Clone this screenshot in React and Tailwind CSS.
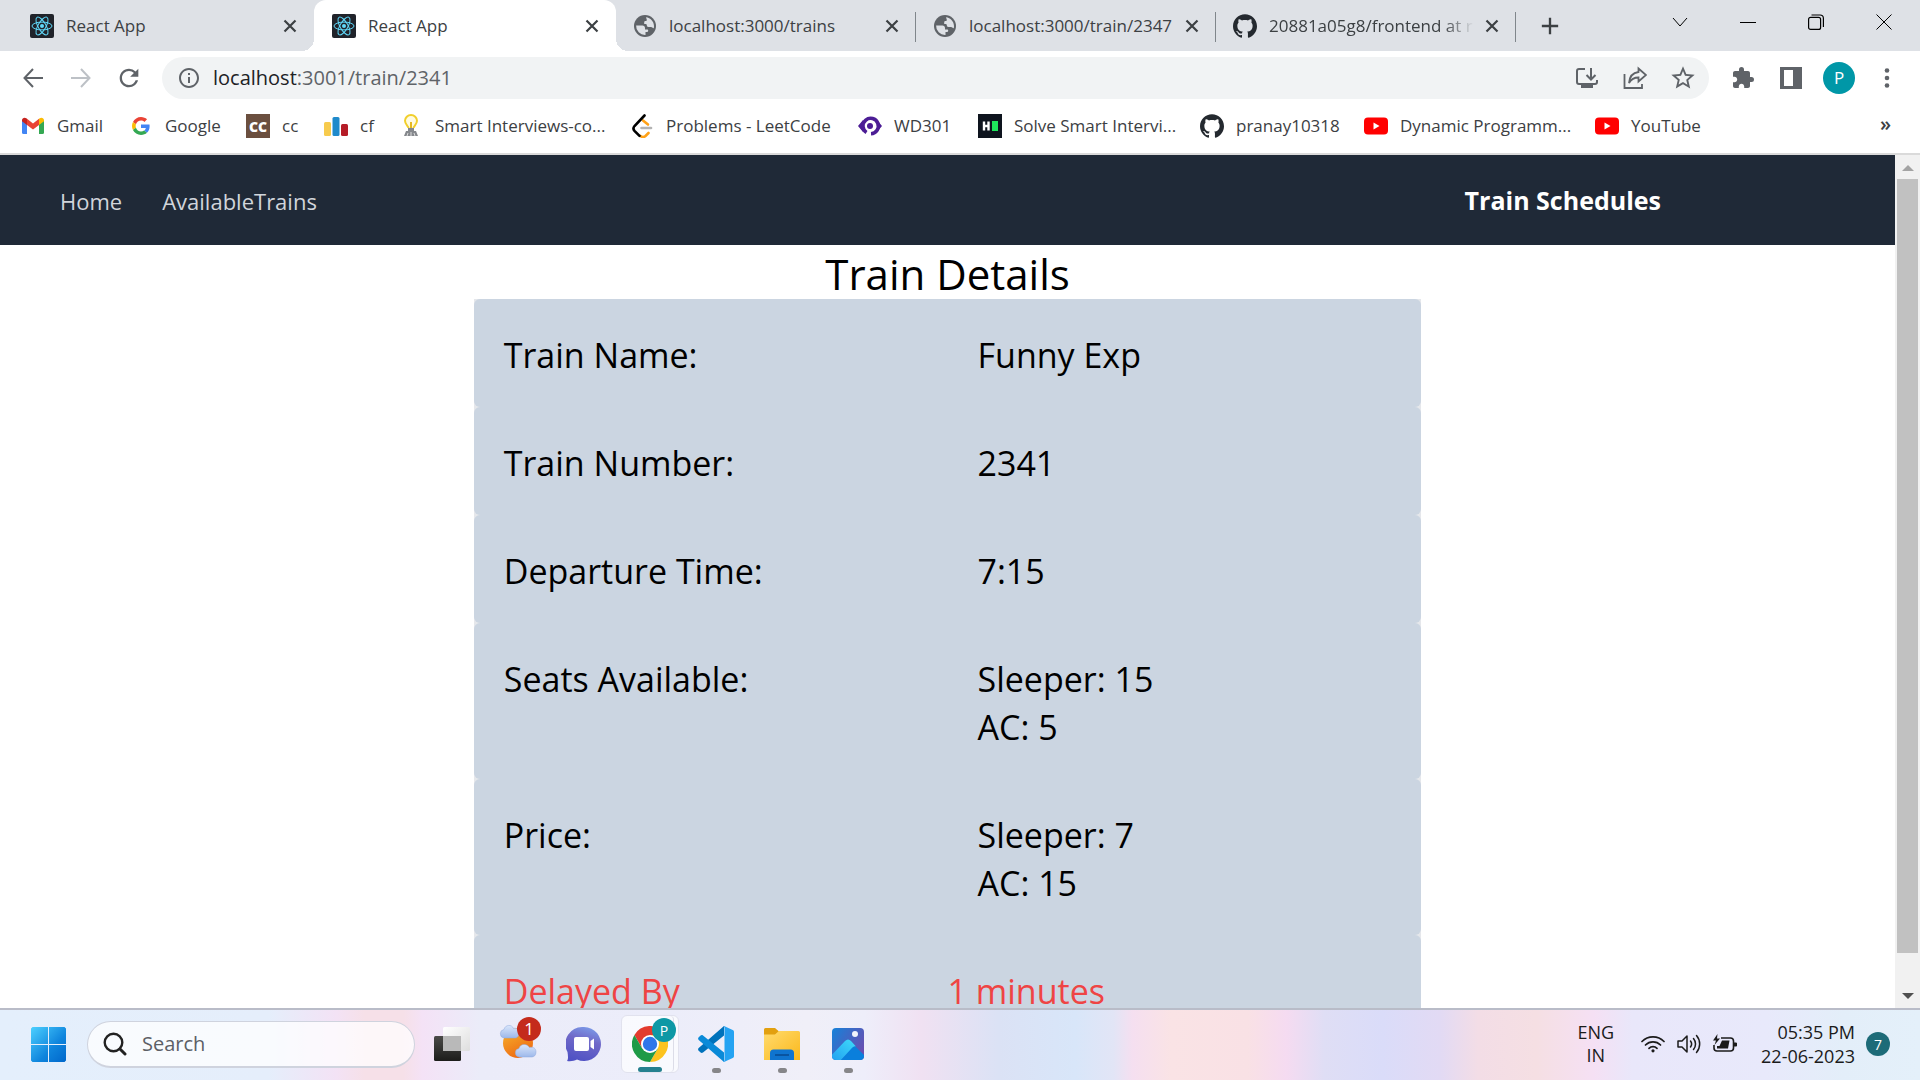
import React from "react";
import { SiGithub } from "react-icons/si";
import { MdExtension, MdStarBorder, MdAdd, MdRefresh, MdInfoOutline } from "react-icons/md";

const ReactFavicon = () => (
  <svg viewBox="0 0 24 24" className="size-6 shrink-0" aria-hidden="true">
    <rect width="24" height="24" rx="2" fill="#20232a" />
    <g fill="none" stroke="#61dafb" strokeWidth="1">
      <ellipse cx="12" cy="12" rx="10" ry="3.9" />
      <ellipse cx="12" cy="12" rx="10" ry="3.9" transform="rotate(60 12 12)" />
      <ellipse cx="12" cy="12" rx="10" ry="3.9" transform="rotate(120 12 12)" />
    </g>
    <circle cx="12" cy="12" r="2" fill="#61dafb" />
  </svg>
);

const GlobeFavicon = () => (
  <svg viewBox="0 0 24 24" className="size-6 shrink-0" aria-hidden="true">
    <circle cx="12" cy="12" r="11" fill="#5f6368" />
    <path
      d="M13 3.200c4.500.6 8 4.300 8 8.800 0 .8-.1 1.500-.3 2.200-1.200-.2-1.500-1.200-2.700-1.200h-2.500c-1.200 0-1.700-.8-1.700-2s-1.300-1-2.600-1V8.200c0-.8.600-1.200 1.400-1.200.9 0 1.200-.5 1.200-1.300z"
      fill="#dee1e6"
    />
    <path
      d="M3.100 11.500h6.400c1.500 0 2.500 1 2.500 2.500v1.500h2c.8 0 1.200.5 1.200 1.300 0 1-.7 1.200-1.700 1.200H12.500v2.900A9 9 0 0 1 3.100 11.500z"
      fill="#dee1e6"
    />
  </svg>
);
const GithubIcon = () => <SiGithub className="size-6 shrink-0 text-[#24292f]" aria-hidden="true" />;

const tabs = [
  { title: "React App", icon: <ReactFavicon />, width: "w-[314px] pl-[30px]", active: false, line: false },
  { title: "React App", icon: <ReactFavicon />, width: "w-[302px] pl-[18px]", active: true, line: false },
  { title: "localhost:3000/trains", icon: <GlobeFavicon />, width: "w-[300px] pl-[17px]", active: false, line: true },
  { title: "localhost:3000/train/2347", icon: <GlobeFavicon />, width: "w-[300px] pl-[17px]", active: false, line: true },
  { title: "20881a05g8/frontend at r", icon: <GithubIcon />, width: "w-[300px] pl-[17px]", active: false, line: true, fade: true },
];

function Tab({ title, icon, width, active, line, fade }) {
  return (
    <div className={`relative flex h-full min-w-0 items-center ${width} ${active ? "rounded-t-xl bg-white" : ""}`}>
      {active && (
        <>
          <span className="absolute -left-3 bottom-0 size-3 bg-[radial-gradient(circle_at_0_0,transparent_12px,white_12px)]" />
          <span className="absolute -right-3 bottom-0 size-3 bg-[radial-gradient(circle_at_100%_0,transparent_12px,white_12px)]" />
        </>
      )}
      {icon}
      <span
        className={`ml-3 min-w-0 flex-1 overflow-hidden whitespace-nowrap ${fade ? "mask-r-from-85% mask-r-to-100%" : ""}`}
      >
        {title}
      </span>
      <button aria-label={`Close ${title}`} className="ml-1.5 mr-3 flex size-6 items-center justify-center">
        <svg viewBox="0 0 14 14" className="size-3.5" fill="none" stroke="#3c4043" strokeWidth="2.200">
          <path d="M1.500 1.500l11 11M12.500 1.500l-11 11" />
        </svg>
      </button>
      {line && <span className="absolute right-0 top-3 h-[30px] w-px bg-[#80868b]" />}
    </div>
  );
}

function TabStrip() {
  return (
    <header className="flex h-[51px] items-center bg-[#dee1e6] pr-0.5 text-[17px] text-[#3c4043]">
      {tabs.map((t, i) => (
        <Tab key={i} {...t} />
      ))}
      <button aria-label="New tab" className="ml-5 flex size-7 items-center justify-center">
        <MdAdd className="size-7" />
      </button>
      <div className="mb-2 ml-auto flex items-center text-black">
        <button aria-label="Search tabs" className="flex w-[68px] justify-center">
          <svg viewBox="0 0 16 16" className="size-4" fill="none" stroke="currentColor"><path d="M1 4l7 8 7-8" /></svg>
        </button>
        <button aria-label="Minimize" className="flex w-[68px] justify-center">
          <svg viewBox="0 0 16 16" className="size-4" fill="none" stroke="currentColor"><path d="M0 8.500h16" /></svg>
        </button>
        <button aria-label="Restore" className="flex w-[68px] justify-center">
          <svg viewBox="0 0 16 16" className="size-4" fill="none" stroke="currentColor" strokeWidth="1.200">
            <rect x="0.600" y="3.400" width="12" height="12" rx="2" />
            <path d="M3.500 1h8.500a3.400 3.400 0 0 1 3.400 3.400V13" />
          </svg>
        </button>
        <button aria-label="Close window" className="flex w-[68px] justify-center">
          <svg viewBox="0 0 16 16" className="size-4" fill="none" stroke="currentColor"><path d="M.5.5l15 15M15.500.5l-15 15" /></svg>
        </button>
      </div>
    </header>
  );
}

function Toolbar() {
  return (
    <div className="flex h-[54px] items-center pl-[9px] pr-[9px] text-[#5f6368]">
      <button aria-label="Back" className="flex w-12 justify-center">
        <svg viewBox="0 0 20 20" className="size-5" fill="none" stroke="currentColor" strokeWidth="2"><path d="M20 10H2M10 1L1.500 10l8.500 9" /></svg>
      </button>
      <button aria-label="Forward" className="flex w-12 justify-center text-[#bdc1c6]">
        <svg viewBox="0 0 20 20" className="size-5" fill="none" stroke="currentColor" strokeWidth="2"><path d="M0 10h18M10 1l8.500 9-8.500 9" /></svg>
      </button>
      <button aria-label="Reload" className="flex w-12 justify-center">
        <MdRefresh className="size-7" />
      </button>
      <div className="ml-[9px] flex h-[42px] flex-1 items-center rounded-full bg-[#f1f3f4] pl-[15px] pr-0.5">
        <MdInfoOutline className="size-6" aria-hidden="true" />
        <div className="ml-3 flex-1 text-[20px]" aria-label="Address">
          <span className="text-[#202124]">localhost</span>:3001/train/2341
        </div>
        <button aria-label="Install app" className="flex w-12 justify-center">
          <svg viewBox="0 0 24 24" className="size-6" fill="none" stroke="currentColor" strokeWidth="2">
            <path d="M10 3H4a2 2 0 0 0-2 2v11a2 2 0 0 0 2 2h16a2 2 0 0 0 2-2v-2M16 2v11M11.500 9l4.500 4.500L20.500 9" />
            <path d="M6 20h12" strokeWidth="4" />
          </svg>
        </button>
        <button aria-label="Share" className="flex w-12 justify-center">
          <svg viewBox="0 0 24 24" className="size-6" fill="none" stroke="currentColor" strokeWidth="1.800">
            <path d="M1.500 8v14H19v-4" />
            <path d="M15.500 2.500L23 9l-7.500 6.500v-4C11 11.500 8 13.500 6 17c.5-6 4-10.300 9.500-11z" />
          </svg>
        </button>
        <button aria-label="Bookmark this page" className="flex w-12 justify-center">
          <MdStarBorder className="size-7" />
        </button>
      </div>
      <button aria-label="Extensions" className="ml-2.5 flex w-12 justify-center"><MdExtension className="size-6" /></button>
      <button aria-label="Side panel" className="flex w-12 justify-center">
        <svg viewBox="0 0 22 22" className="size-[22px]"><path fill="currentColor" d="M0 0h22v22H0z" /><path fill="#fff" d="M4 3h9v16H4z" /></svg>
      </button>
      <button aria-label="Profile" className="flex w-12 justify-center">
        <span className="flex size-8 items-center justify-center rounded-full bg-[#0097a7] text-[17px] text-white">P</span>
      </button>
      <button aria-label="Menu" className="flex w-12 justify-center">
        <svg viewBox="0 0 6 20" className="h-5 w-1.5" fill="currentColor"><circle cx="3" cy="2.500" r="2.300" /><circle cx="3" cy="10" r="2.300" /><circle cx="3" cy="17.500" r="2.300" /></svg>
      </button>
    </div>
  );
}

const YoutubeIcon = () => (
  <svg viewBox="0 0 24 24" className="size-6" aria-hidden="true"><rect y="3.500" width="24" height="17" rx="4" fill="#f00" /><path d="M9.500 8.500v7l6-3.500z" fill="#fff" /></svg>
);

const bookmarks = [
  { name: "Gmail", width: "w-[108px]", icon: (
    <svg viewBox="0 0 24 24" className="size-6" aria-hidden="true">
      <path fill="#4285f4" d="M1 6.500v12A1.500 1.500 0 0 0 2.500 20H6V10z" />
      <path fill="#34a853" d="M23 6.500v12a1.500 1.500 0 0 1-1.500 1.500H18V10z" />
      <path fill="#ea4335" d="M6 4.800l6 4.700 6-4.700V11l-6 4.600L6 11z" />
      <path fill="#c5221f" d="M1 6.300C1 4 3.600 3 5.300 4.300L6 4.800V11L1 7.300z" />
      <path fill="#fbbc04" d="M23 6.300c0-2.300-2.600-3.300-4.300-2l-.7.5V11l5-3.700z" />
    </svg>
  ) },
  { name: "Google", width: "w-[117px]", icon: (
    <svg viewBox="0 0 48 48" className="size-[18px]" aria-hidden="true">
      <path fill="#ea4335" d="M24 9.500c3.540 0 6.710 1.220 9.210 3.600l6.850-6.850C35.900 2.380 30.470 0 24 0 14.620 0 6.510 5.380 2.560 13.220l7.980 6.190C12.430 13.720 17.740 9.500 24 9.500z" />
      <path fill="#4285f4" d="M46.980 24.550c0-1.570-.15-3.090-.38-4.550H24v9.020h12.940c-.58 2.960-2.260 5.480-4.780 7.180l7.730 6c4.510-4.180 7.090-10.360 7.090-17.650z" />
      <path fill="#fbbc05" d="M10.530 28.590c-.48-1.450-.76-2.990-.76-4.590s.27-3.140.76-4.590l-7.980-6.190C.92 16.460 0 20.120 0 24s.92 7.540 2.560 10.780l7.970-6.190z" />
      <path fill="#34a853" d="M24 48c6.480 0 11.930-2.130 15.890-5.810l-7.730-6c-2.150 1.450-4.920 2.300-8.160 2.300-6.260 0-11.570-4.220-13.470-9.910l-7.980 6.190C6.510 42.620 14.620 48 24 48z" />
    </svg>
  ) },
  { name: "cc", width: "w-[78px]", icon: (
    <span className="flex size-6 items-center justify-center bg-[#6b4f3f] text-[14px] font-extrabold text-white" aria-hidden="true">CC</span>
  ) },
  { name: "cf", width: "w-[75px]", icon: (
    <svg viewBox="0 0 24 24" className="size-6" aria-hidden="true"><rect y="8" width="7" height="14" rx="1.500" fill="#f7cb4d" /><rect x="8.500" y="3" width="7" height="19" rx="1.500" fill="#1f8acb" /><rect x="17" y="10" width="7" height="12" rx="1.500" fill="#b51c27" /></svg>
  ) },
  { name: "Smart Interviews-co...", width: "w-[231px]", icon: (
    <svg viewBox="0 0 24 24" className="size-6" aria-hidden="true">
      <path d="M9.500 14c0-2-3.500-3.500-3.500-7.200a6 5.800 0 0 1 12 0c0 3.700-3.500 5.200-3.500 7.200" fill="#fffbe0" stroke="#f1cf2c" strokeWidth="2" />
      <path d="M12 8v6" stroke="#e6b820" strokeWidth="2" />
      <path d="M9 14h6v3h2l2 5H5l2-5h2z" fill="#85888d" /><path d="M8 22l1-3M16 22l-1-3M12 22v-4" stroke="#ddd" />
    </svg>
  ) },
  { name: "Problems - LeetCode", width: "w-[228px]", icon: (
    <svg viewBox="0 0 24 24" className="size-6" fill="none" strokeWidth="2.600" strokeLinecap="round" aria-hidden="true">
      <path d="M18.500 19l-3 3c-1.500 1.300-3.500 1.300-5 0" stroke="#ffa116" />
      <path d="M13 6.500l5 4" stroke="#ffa116" />
      <path d="M14.500 1.500L4.500 12c-1.300 1.500-1.300 3.300 0 4.800l5 5" stroke="#000" />
      <path d="M11.500 14H21" stroke="#b3b3b3" />
    </svg>
  ) },
  { name: "WD301", width: "w-[120px]", icon: (
    <svg viewBox="0 0 24 24" className="size-6" aria-hidden="true">
      <path d="M0 12l5-6v12zM24 12l-5-6v12z" fill="#4c1d95" />
      <path d="M8.500 18.500A7.700 7.700 0 1 1 13 19.700" fill="none" stroke="#4c1d95" strokeWidth="3.600" />
      <circle cx="12" cy="12" r="3" fill="#4c1d95" />
    </svg>
  ) },
  { name: "Solve Smart Intervi...", width: "w-[222px]", icon: (
    <svg viewBox="0 0 24 24" className="size-6" aria-hidden="true"><path fill="#0e141e" d="M0 0h24v24H0z" /><path d="M6 7.500v9M10.500 7.500v9M5 12h6" stroke="#fff" strokeWidth="2.400" /><path fill="#1ee65c" d="M14 7h6v10h-6z" /></svg>
  ) },
  { name: "pranay10318", width: "w-[164px]", icon: <GithubIcon /> },
  { name: "Dynamic Programm...", width: "w-[231px]", icon: <YoutubeIcon /> },
  { name: "YouTube", width: "w-[110px]", icon: <YoutubeIcon /> },
];

function BookmarksBar() {
  return (
    <nav aria-label="Bookmarks" className="flex h-[50px] items-center border-b-2 border-[#dadada] pb-1.5 pl-[21px] pr-[29px] text-[17px] text-[#3c4043]">
      {bookmarks.map((b) => (
        <a key={b.name} href="#" className={`flex shrink-0 items-center gap-3 whitespace-nowrap ${b.width}`}>
          <span className="flex w-6 shrink-0 justify-center">{b.icon}</span>
          {b.name}
        </a>
      ))}
      <button aria-label="More bookmarks" className="mb-1 ml-auto text-[20px] font-semibold leading-none">»</button>
    </nav>
  );
}

const rows = [
  { label: "Train Name:", values: ["Funny Exp"] },
  { label: "Train Number:", values: ["2341"] },
  { label: "Departure Time:", values: ["7:15"] },
  { label: "Seats Available:", values: ["Sleeper: 15", "AC: 5"] },
  { label: "Price:", values: ["Sleeper: 7", "AC: 15"] },
];

function TrainPage() {
  return (
    <div className="flex min-h-0 flex-1 bg-white">
      <main className="min-w-0 flex-1 overflow-hidden">
        <nav aria-label="Site" className="flex h-[90px] items-center bg-[#1f2937] pl-[60px] pt-0.5">
          <div className="flex gap-10 text-[22px] text-[#d1d5db]">
            <a href="#">Home</a>
            <a href="#">AvailableTrains</a>
          </div>
          <span className="ml-auto mr-[234px] text-[25px] font-bold text-white">Train Schedules</span>
        </nav>
        <h1 className="pt-1 text-center text-[42px] leading-[50px] text-black">Train Details</h1>
        <div className="mx-auto w-1/2 bg-gray-200 text-[34px] leading-[48px] text-black">
          {rows.map((r) => (
            <div key={r.label} className="grid grid-cols-2 rounded-md bg-[#cbd5e1] px-[30px] pb-7 pt-8">
              <div>{r.label}</div>
              <div className="pl-[30px]">
                {r.values.map((v) => (
                  <div key={v}>{v}</div>
                ))}
              </div>
            </div>
          ))}
          <div className="grid grid-cols-2 rounded-md bg-[#cbd5e1] px-[30px] pb-7 pt-8 text-[#ef4444]">
            <div>Delayed By</div>
            <div>1 minutes</div>
          </div>
        </div>
      </main>
      <div className="flex w-[25px] flex-col items-center bg-[#f1f1f1]" aria-hidden="true">
        <svg viewBox="0 0 12 6" className="mb-2 mt-2.5 h-1.5 w-3"><path d="M6 0l6 6H0z" fill="#a3a3a3" /></svg>
        <div className="w-[21px] flex-1 bg-[#c1c1c1]" />
        <svg viewBox="0 0 12 6" className="mb-[9px] mt-10 h-1.5 w-3"><path d="M0 0h12L6 6z" fill="#505050" /></svg>
      </div>
    </div>
  );
}

const WindowsLogo = () => (
  <svg viewBox="0 0 35 35" className="size-[35px]" aria-hidden="true">
    <defs><linearGradient id="win" x1="0" y1="0" x2="1" y2="1"><stop offset="0" stopColor="#4cd0ff" /><stop offset="0.600" stopColor="#0f85dd" /><stop offset="1" stopColor="#0067cb" /></linearGradient></defs>
    <path fill="url(#win)" d="M1.500 0H17v17H0V1.500zM18 0h15.500L35 1.500V17H18zM0 18h17v17H1.500L0 33.500zM18 18h17v15.500L33.500 35H18z" />
  </svg>
);

const TaskViewIcon = () => (
  <svg viewBox="0 0 36 36" className="size-9" aria-hidden="true">
    <defs>
      <linearGradient id="tvd" x1="0" y1="0" x2="0" y2="1"><stop offset="0" stopColor="#4a4a48" /><stop offset="1" stopColor="#1c1c1a" /></linearGradient>
      <linearGradient id="tvl" x1="0" y1="0" x2="1" y2="1"><stop offset="0" stopColor="#fff" /><stop offset="1" stopColor="#dedede" /></linearGradient>
    </defs>
    <rect y="10" width="27" height="25" rx="1.500" fill="url(#tvd)" />
    <rect x="9" y="1" width="27" height="24" rx="1.500" fill="url(#tvl)" />
    <path d="M9 10h18v15H9z" fill="#b9b9b9" />
  </svg>
);

const WeatherIcon = () => (
  <svg viewBox="0 0 42 42" className="size-[42px]" aria-hidden="true">
    <defs>
      <linearGradient id="sun" x1="0" y1="0" x2="0.500" y2="1"><stop offset="0" stopColor="#f7b52c" /><stop offset="1" stopColor="#ee6c14" /></linearGradient>
      <linearGradient id="cl" x1="0" y1="0" x2="0" y2="1"><stop offset="0" stopColor="#d9e6fb" /><stop offset="1" stopColor="#9db8ea" /></linearGradient>
    </defs>
    <circle cx="21" cy="20" r="15" fill="url(#sun)" />
    <path d="M7 15a4.300 4.300 0 0 1 0-8.500c1-5 8-5.500 9.500-1 3-1 5.500 1 5.500 4.500s-2 5-4 5z" fill="url(#cl)" stroke="#8ea9dc" strokeWidth="0.500" />
    <path d="M22 34a4.300 4.300 0 0 1 0-8.500c1-5 8-5.500 10.500-1 4-1 6.500 1 6.500 4.500s-2 5-4.500 5z" fill="url(#cl)" stroke="#8ea9dc" strokeWidth="0.500" />
  </svg>
);

const ChatIcon = () => (
  <svg viewBox="0 0 36 36" className="size-9" aria-hidden="true">
    <defs><linearGradient id="chat" x1="0.700" y1="0" x2="0.400" y2="1"><stop offset="0" stopColor="#7b9ae8" /><stop offset="0.400" stopColor="#7069c8" /><stop offset="1" stopColor="#5052c4" /></linearGradient></defs>
    <path d="M18 1a17 17 0 1 1-7 32.500c-3 1.500-6 2-10 1.500 1.500-2 1-5 .500-9A17 17 0 0 1 18 1z" fill="url(#chat)" />
    <rect x="8" y="11" width="15" height="14" rx="2" fill="#fff" />
    <path d="M24.500 15l3.500-2.500v11L24.500 21z" fill="#fff" />
  </svg>
);

const ChromeIcon = () => (
  <svg viewBox="0 0 36 36" className="size-9" aria-hidden="true">
    <path fill="#e33b2e" d="M2.400 9A18 18 0 0 1 33.600 9L18 10 10.200 22.500z" />
    <path fill="#fcc31e" d="M33.600 9A18 18 0 0 1 18 36L25.800 22.500 18 9z" />
    <path fill="#1e9a47" d="M2.400 9A18 18 0 0 0 18 36l7.800-13.500H10.200z" />
    <circle cx="18" cy="18" r="9" fill="#fff" />
    <circle cx="18" cy="18" r="7.200" fill="#2f76ea" />
  </svg>
);

const VsCodeIcon = () => (
  <svg viewBox="0 0 36 36" className="size-9" aria-hidden="true">
    <path fill="#0072bb" d="M26 0v9.500L5 26.500c-.8.700-1.800.6-2.400 0L.7 24.800c-.8-.8-.8-2 0-2.700z" />
    <path fill="#0a8ad8" d="M26 36v-9.500L5 9.500c-.8-.7-1.800-.6-2.400 0L.7 11.200c-.8.8-.8 2 0 2.700z" />
    <path fill="#25a3f2" d="M26 0l8.700 4c.8.400 1.300 1 1.300 2v24c0 1-.5 1.600-1.300 2L26 36c-.8 0 .5-1 .5-2V2c0-1-1.300-2-.5-2z" />
  </svg>
);

const ExplorerIcon = () => (
  <svg viewBox="0 0 36 36" className="size-9" aria-hidden="true">
    <defs><linearGradient id="fold" x1="0" y1="0" x2="1" y2="1"><stop offset="0" stopColor="#ffdb6e" /><stop offset="1" stopColor="#fbb81b" /></linearGradient></defs>
    <path d="M0 3.500A1.500 1.500 0 0 1 1.500 2H11l4 3.500-4 4H0z" fill="#e2a00f" />
    <path d="M0 8.500h11L15 5h19.500A1.500 1.500 0 0 1 36 6.500V34H0z" fill="url(#fold)" />
    <path d="M6 34v-7a3.500 3.500 0 0 1 3.500-3.500h17A3.500 3.500 0 0 1 30 27v7z" fill="#0f74cf" />
    <path d="M11 29h14" stroke="#084a91" strokeWidth="1.500" />
  </svg>
);

const PhotosIcon = () => (
  <svg viewBox="0 0 36 36" className="size-9" aria-hidden="true">
    <defs>
      <linearGradient id="ph" x1="0" y1="0" x2="1" y2="0.600"><stop offset="0" stopColor="#0f86dc" /><stop offset="1" stopColor="#6a4db0" /></linearGradient>
      <linearGradient id="mt" x1="1" y1="0" x2="0" y2="1"><stop offset="0" stopColor="#3fdcfa" /><stop offset="1" stopColor="#1f9cf0" /></linearGradient>
      <clipPath id="phc"><rect x="2" y="2" width="32" height="32" rx="4" /></clipPath>
    </defs>
    <g clipPath="url(#phc)">
      <path fill="url(#ph)" d="M0 0h36v36H0z" />
      <path fill="#0a7fdc" d="M9 36l13-15c1.500-1.500 2.500-1.500 4 0l10 10v5z" />
      <path fill="url(#mt)" d="M0 31l15-16c2-2 4-2 6 0l5 5.500c-2-.5-3 .5-5 2.500L9 36H0z" />
    </g>
    <circle cx="25" cy="8" r="3" fill="#f1f4fb" />
  </svg>
);

const apps = [
  { name: "Task view", icon: <TaskViewIcon /> },
  { name: "Weather", icon: <WeatherIcon />, badge: "1" },
  { name: "Chat", icon: <ChatIcon /> },
  { name: "Chrome", icon: <ChromeIcon />, badge: "P", active: true },
  { name: "Visual Studio Code", icon: <VsCodeIcon />, open: true },
  { name: "File Explorer", icon: <ExplorerIcon />, open: true },
  { name: "Photos", icon: <PhotosIcon />, open: true },
];

function TaskbarApp({ name, icon, badge, active, open }) {
  return (
    <button
      aria-label={name}
      className={`relative flex h-[58px] items-center justify-center ${active ? "mx-1 w-[58px] rounded-md border border-[#e1e2ee] bg-white/70" : "w-[66px]"}`}
    >
      {active && <span className="absolute bottom-0 right-1 top-0 w-1 rounded-r-md border-r border-[#dcdde8]" />}
      {icon}
      {badge && (
        <span
          className={`absolute flex size-6 items-center justify-center rounded-full text-white ${active ? "right-0.5 top-0.5 bg-[#0d98a5] text-[14px]" : "right-2.5 top-0.5 bg-[#c42b1c] text-[17px]"}`}
        >
          {badge}
        </span>
      )}
      {active && <span className="absolute bottom-0 h-[5px] w-6 rounded-full bg-[#25808f]" />}
      {open && <span className="absolute bottom-0 h-[5px] w-[9px] rounded-full bg-[#868689]" />}
    </button>
  );
}

function Taskbar() {
  return (
    <footer className="flex h-[72px] items-center border-t-2 border-[#b9bcc8] bg-[linear-gradient(90deg,#e4effc_0%,#e5eefb_14%,#f3e2f5_17.500%,#f6e0e8_19%,#f6e0e8_21%,#f4e2f6_22%,#ebecf9_25%,#ecedfa_35%,#f0eff8_42%,#eeeefa_45%,#f0e1f2_48%,#dbe2f5_52%,#d8e6f9_56%,#e2e5f6_58%,#f5dff0_59%,#fae3e5_61%,#f9e1e5_65%,#f5dbf1_67%,#dfdef5_69%,#dadcf9_72%,#e2daf4_75%,#f3dde6_77%,#f5dfe3_80%,#f5e0f4_83%,#e9e7fa_85%,#e8e9fb_92%,#e3eef9_96%,#e4f0fa_100%)] pb-0.5 pl-[31px] pr-[30px] text-[#1b1b1b]">
      <button aria-label="Start"><WindowsLogo /></button>
      <label className="ml-[21px] mr-1 flex h-[47px] w-[328px] items-center rounded-full border border-b-2 border-[#cfd3de] bg-white/75 pl-[15px]">
        <svg viewBox="0 0 24 24" className="size-6 shrink-0" fill="none" stroke="#222" strokeWidth="2.400" strokeLinecap="round" aria-hidden="true"><circle cx="10.500" cy="10.500" r="8.800" /><path d="M17 17l5 5" strokeWidth="3" /></svg>
        <input aria-label="Search" placeholder="Search" className="ml-[15px] min-w-0 flex-1 bg-transparent text-[20px] outline-none placeholder:text-[#5c5f66]" />
      </label>
      <div className="flex items-center">
        {apps.map((a) => (
          <TaskbarApp key={a.name} {...a} />
        ))}
      </div>
      <div className="ml-auto flex items-center">
        <button className="text-center text-[18px] leading-[23px]">ENG<br />IN</button>
        <button aria-label="Network, volume and battery" className="ml-[27px] flex items-center gap-3">
          <svg viewBox="0 0 24 20" className="h-5 w-6" fill="none" stroke="currentColor" strokeWidth="1.700" strokeLinecap="round"><path d="M1 7.500a15.500 15.500 0 0 1 22 0M4.500 11a10.500 10.500 0 0 1 15 0M8 14.300a5.700 5.700 0 0 1 8 0" /><circle cx="12" cy="16.800" r="1.600" fill="currentColor" stroke="none" /></svg>
          <svg viewBox="0 0 24 20" className="h-5 w-6" fill="none" stroke="currentColor" strokeWidth="1.500" strokeLinecap="round" strokeLinejoin="round"><path d="M1 7h4l5-5v16l-5-5H1zM13.500 7a5 5 0 0 1 0 6M16.500 4.500a8.500 8.500 0 0 1 0 11M19.500 1.500a13 13 0 0 1 0 17" /></svg>
          <svg viewBox="0 0 24 20" className="h-5 w-6"><path d="M8 4h9.500a3 3 0 0 1 3 3v7a3 3 0 0 1-3 3H4a3 3 0 0 1-3-3v-3" fill="none" stroke="currentColor" strokeWidth="1.600" /><path d="M9 6.500h7.500L15 14.500H4V12h2.500zM21 8.500h1.500A1.200 1.200 0 0 1 24 10v1a1.200 1.200 0 0 1-1.500 1.500H21zM4.500 0L0 6.500h3L1.500 11 7 4.500H4z" fill="currentColor" /></svg>
        </button>
        <button className="ml-6 text-right text-[18px] leading-6">05:35 PM<br />22-06-2023</button>
        <span className="ml-[11px] flex size-6 items-center justify-center rounded-full bg-[#1d6b78] text-[14px] text-white">7</span>
      </div>
    </footer>
  );
}

export default function App() {
  return (
    <div className="flex h-screen flex-col overflow-hidden bg-white font-['Open_Sans','Noto_Sans',sans-serif]">
      <TabStrip />
      <Toolbar />
      <BookmarksBar />
      <TrainPage />
      <Taskbar />
    </div>
  );
}
